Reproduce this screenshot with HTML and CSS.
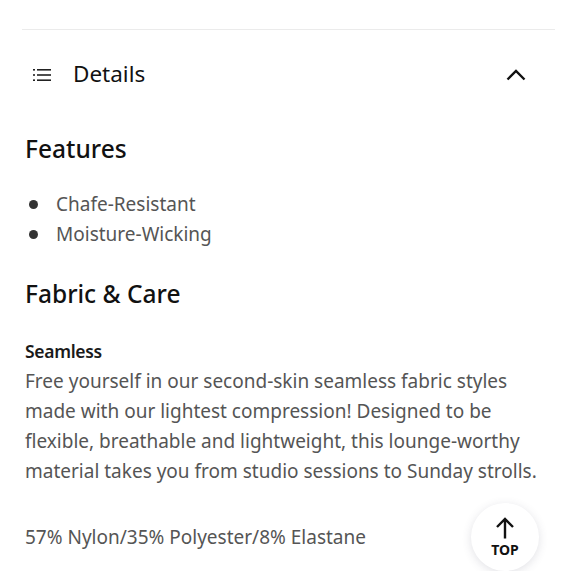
FILE: index.html
```html
<!DOCTYPE html>
<html>
<head>
<meta charset="utf-8">
<link rel="stylesheet" href="styles.css">
</head>
<body>
<div class="page">
  <hr class="divider">
  <div class="accordion-head">
    <svg class="list-icon" width="18" height="14" viewBox="0 0 18 14">
      <rect x="0" y="1" width="2" height="1.6" fill="#222"/>
      <rect x="4" y="1" width="14" height="1.6" fill="#222"/>
      <rect x="0" y="6.2" width="2" height="1.6" fill="#222"/>
      <rect x="4" y="6.2" width="14" height="1.6" fill="#222"/>
      <rect x="0" y="11.4" width="2" height="1.6" fill="#222"/>
      <rect x="4" y="11.4" width="14" height="1.6" fill="#222"/>
    </svg>
    <span class="head-title">Details</span>
    <svg class="chevron" width="20" height="12" viewBox="0 0 20 12">
      <path d="M1.5 10.5 L10 2 L18.5 10.5" fill="none" stroke="#111" stroke-width="2.4"/>
    </svg>
  </div>
  <h2 class="section-title">Features</h2>
  <ul class="features">
    <li>Chafe-Resistant</li>
    <li>Moisture-Wicking</li>
  </ul>
  <h2 class="section-title">Fabric &amp; Care</h2>
  <h3 class="sub-title">Seamless</h3>
  <p class="body-text">Free yourself in our second-skin seamless fabric styles made with our lightest compression! Designed to be flexible, breathable and lightweight, this lounge-worthy material takes you from studio sessions to Sunday strolls.</p>
  <div class="composition-row">
    <p class="body-text">57% Nylon/35% Polyester/8% Elastane</p>
    <button class="top-btn">
      <svg width="20" height="22" viewBox="0 0 20 22">
        <path d="M10 21.5 V2 M2 10 L10 2 L18 10" fill="none" stroke="#111" stroke-width="2.4"/>
      </svg>
      <span>TOP</span>
    </button>
  </div>
</div>
</body>
</html>
```

FILE: styles.css
```css
html, body {
  margin: 0;
  padding: 0;
  background: #fff;
}
body {
  font-family: "Noto Sans", sans-serif;
  color: #111;
}
.page {
  padding: 29px 25px 0 25px;
}
.divider {
  margin: 0 0 0 -3px;
  border: none;
  border-top: 1px solid #ebebeb;
  width: 533px;
}
.accordion-head {
  display: flex;
  align-items: center;
  height: 89px;
  padding: 0 29px 14px 8px;
}
.list-icon {
  margin-right: 22px;
}
.head-title {
  font-size: 22.5px;
  flex: 1;
  margin-top: -2px;
}
.section-title {
  font-size: 24.5px;
  font-weight: 500;
  margin: 0;
  line-height: 32px;
}
.features {
  list-style: none;
  margin: 24px 0 29px 0;
  padding: 0;
}
.features li {
  font-size: 19px;
  line-height: 30px;
  color: #555;
  display: flex;
  align-items: center;
}
.features li::before {
  content: "";
  width: 9px;
  height: 9px;
  border-radius: 50%;
  background: #333;
  margin: 0 18px 0 4px;
}
.sub-title {
  font-size: 17.5px;
  font-weight: 600;
  letter-spacing: -0.3px;
  margin: 26px 0 0 0;
  line-height: 30px;
  color: #1a1a1a;
}
.body-text {
  font-size: 19px;
  line-height: 30px;
  color: #555;
  margin: 0;
}
.composition-row {
  display: flex;
  align-items: center;
  justify-content: space-between;
  margin-top: 17px;
}
.top-btn {
  width: 68px;
  height: 68px;
  border-radius: 50%;
  border: none;
  background: #fff;
  box-shadow: 0 2px 10px rgba(60, 60, 90, 0.15);
  display: flex;
  flex-direction: column;
  align-items: center;
  justify-content: center;
  gap: 3px;
  margin-right: 16px;
  padding: 0 0 0 0;
  font-family: "Noto Sans", sans-serif;
  font-weight: 700;
  font-size: 14px;
  line-height: 16px;
  color: #111;
}
```
